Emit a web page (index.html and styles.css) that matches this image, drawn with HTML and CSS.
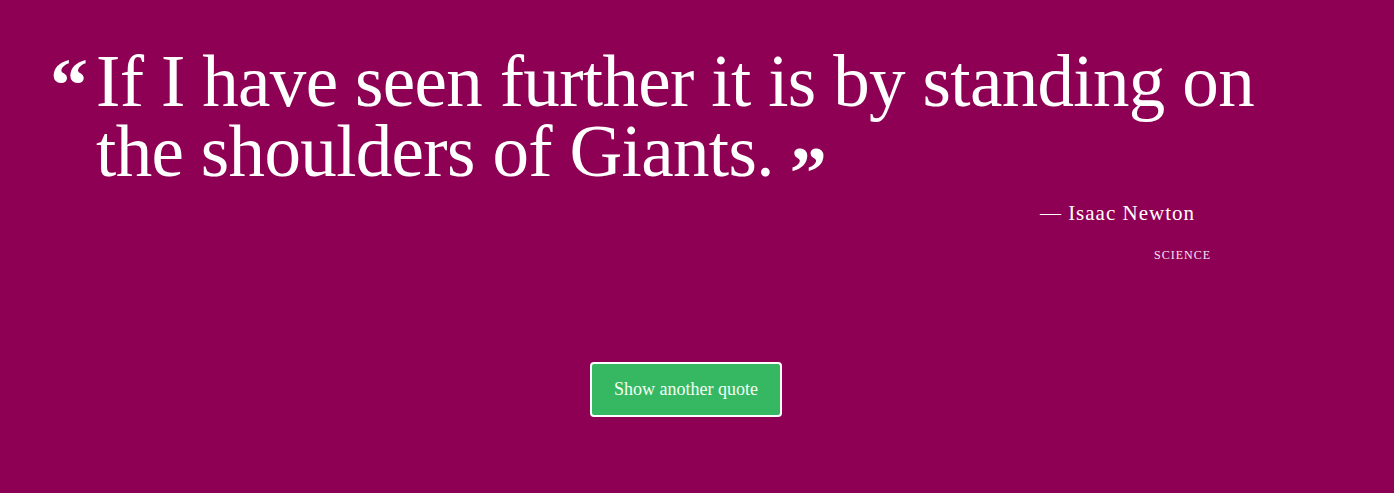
FILE: index.html
```html
<!DOCTYPE html>
<html lang="en">
<head>
<meta charset="utf-8">
<title>Random Quote</title>
<link rel="stylesheet" href="styles.css">
</head>
<body>
<main class="page">
  <section class="quote-box">
    <blockquote class="quote">
      <span class="mark mark-open">&ldquo;</span>
      <p class="quote-text">If I have seen further it is by standing on the shoulders of Giants.</p>
    </blockquote>
    <div class="meta">
      <p class="author">&mdash; Isaac Newton</p>
      <a class="tag" href="#">Science</a>
    </div>
  </section>
  <div class="actions">
    <button class="btn" type="button">Show another quote</button>
  </div>
</main>
</body>
</html>
```

FILE: styles.css
```css
html, body {
  margin: 0;
  padding: 0;
}
body {
  background: #8e0054;
  color: #ffffff;
  font-family: "Liberation Serif", "DejaVu Serif", serif;
  height: 493px;
  overflow: hidden;
}
.page {
  display: flex;
  flex-direction: column;
}
.quote-box {
  padding: 47px 0 0 48px;
  width: 1163px;
}
.quote {
  margin: 0;
  display: flex;
  align-items: flex-start;
}
.mark {
  font-weight: bold;
}
.mark-open {
  font-size: 76px;
  line-height: 1;
  width: 46px;
  padding-left: 2px;
  flex: none;
  padding-top: 0;
}
.quote-text::after {
  content: "\201D";
  font-weight: bold;
  font-size: 74px;
  line-height: 0;
  letter-spacing: 0;
  margin-left: 16px;
  vertical-align: -22px;
}
.quote-text {
  margin: 0;
  font-size: 73px;
  line-height: 70px;
  letter-spacing: -0.65px;
  font-weight: normal;
  width: 1200px;
  flex: none;
}
.meta {
  display: flex;
  flex-direction: column;
  align-items: flex-end;
}
.author {
  margin: 14px 0 0;
  font-size: 21px;
  letter-spacing: 1px;
  padding-right: 16px;
}
.tag {
  margin-top: 22px;
  font-size: 12px;
  letter-spacing: 1px;
  text-transform: uppercase;
  color: #fbe3f3;
  text-decoration: none;
}
.actions {
  display: flex;
  justify-content: center;
  padding-top: 99px;
}
.btn {
  width: 192px;
  height: 55px;
  background: #36b863;
  border: 2px solid #ffffff;
  border-radius: 4px;
  color: #f4fff4;
  font-family: "Liberation Serif", "DejaVu Serif", serif;
  font-size: 18px;
  margin-left: -22px;
}
```
